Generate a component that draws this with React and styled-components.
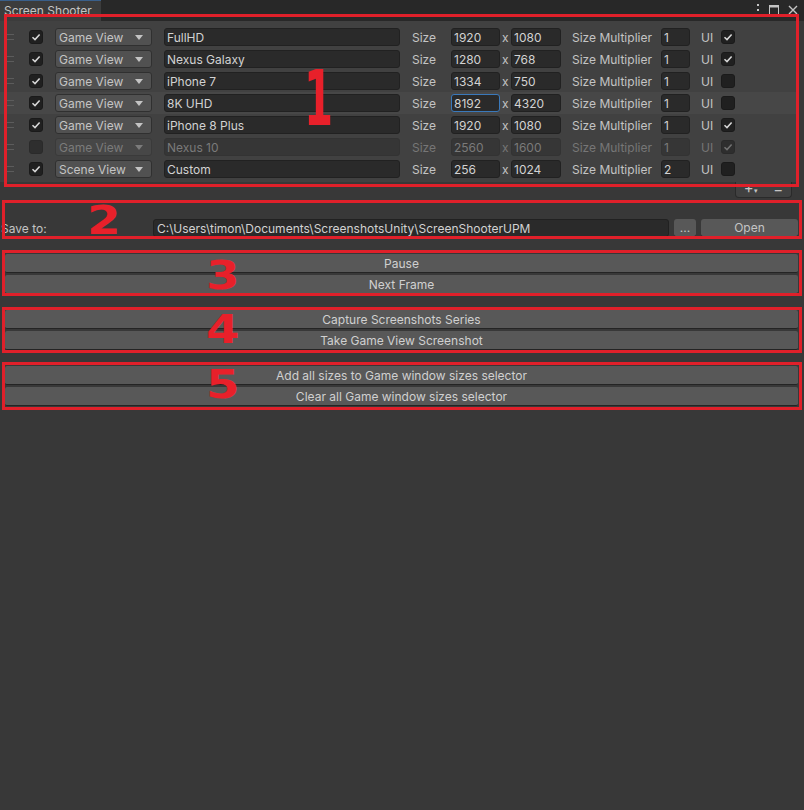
import styled, { createGlobalStyle, css } from "styled-components";

const GlobalStyle = createGlobalStyle`
  html, body {
    margin: 0;
    padding: 0;
    background: #383838;
  }
  body {
    font-family: Inter, "Noto Sans", sans-serif;
    font-size: 12px;
    color: #c4c4c4;
  }
`;

const sizes = [
  { on: true, view: "Game View", name: "FullHD", w: "1920", h: "1080", mult: "1", ui: true },
  { on: true, view: "Game View", name: "Nexus Galaxy", w: "1280", h: "768", mult: "1", ui: true },
  { on: true, view: "Game View", name: "iPhone 7", w: "1334", h: "750", mult: "1", ui: false },
  { on: true, view: "Game View", name: "8K UHD", w: "8192", h: "4320", mult: "1", ui: false, hover: true, focus: true },
  { on: true, view: "Game View", name: "iPhone 8 Plus", w: "1920", h: "1080", mult: "1", ui: true },
  { on: false, view: "Game View", name: "Nexus 10", w: "2560", h: "1600", mult: "1", ui: true, disabled: true },
  { on: true, view: "Scene View", name: "Custom", w: "256", h: "1024", mult: "2", ui: false },
];

// red annotation boxes drawn over the screenshot
const frames = [
  { x: 4, y: 14, w: 795, h: 173 },
  { x: 2, y: 200, w: 800, h: 39 },
  { x: 2, y: 250, w: 800, h: 46 },
  { x: 2, y: 307, w: 800, h: 46 },
  { x: 2, y: 362, w: 800, h: 48 },
];

const marks = [
  { n: "1", x: 304, y: 60, tall: true },
  { n: "2", x: 87, y: 201 },
  { n: "3", x: 206, y: 256 },
  { n: "4", x: 206, y: 310 },
  { n: "5", x: 206, y: 365 },
];

function Check() {
  return (
    <svg width="10" height="10" viewBox="0 0 10 10">
      <polyline points="1.5,5.2 4,7.6 8.6,2.4" fill="none" stroke="currentColor" strokeWidth="1.5" />
    </svg>
  );
}

function Checkbox({ checked, disabled }) {
  return <Box $disabled={disabled}>{checked && <Check />}</Box>;
}

function SizeRow({ row }) {
  const d = row.disabled;
  return (
    <Row $hover={row.hover}>
      <Handle />
      <Checkbox checked={row.on} disabled={d} />
      <Dropdown $disabled={d}>
        <span>{row.view}</span>
        <Arrow />
      </Dropdown>
      <Field $w={236} $disabled={d}>{row.name}</Field>
      <Label $disabled={d}>Size</Label>
      <Field $w={49} $disabled={d} $focus={row.focus}>{row.w}</Field>
      <Times $disabled={d}>x</Times>
      <Field $w={50} $disabled={d}>{row.h}</Field>
      <Label $disabled={d}>Size Multiplier</Label>
      <Field $w={29} $disabled={d}>{row.mult}</Field>
      <Label $disabled={d}>UI</Label>
      <Checkbox checked={row.ui} disabled={d} />
    </Row>
  );
}

export default function App() {
  return (
    <Window>
      <GlobalStyle />
      <TabBar>
        <Tab>Screen Shooter</Tab>
        <WindowIcons>
          <svg width="4" height="12" viewBox="0 0 4 12">
            <rect x="1" y="0" width="2" height="2" fill="#c4c4c4" />
            <rect x="1" y="5" width="2" height="2" fill="#c4c4c4" />
            <rect x="1" y="10" width="2" height="2" fill="#c4c4c4" />
          </svg>
          <svg width="10" height="10" viewBox="0 0 10 10">
            <rect x="0.5" y="0.5" width="9" height="9" fill="none" stroke="#c4c4c4" />
            <rect x="0.5" y="0.5" width="9" height="2" fill="#c4c4c4" />
          </svg>
          <svg width="10" height="10" viewBox="0 0 10 10">
            <path d="M1 1 L9 9 M9 1 L1 9" stroke="#c4c4c4" strokeWidth="1.4" />
          </svg>
        </WindowIcons>
      </TabBar>

      <ListPanel>
        {sizes.map((row, i) => (
          <SizeRow key={i} row={row} />
        ))}
      </ListPanel>
      <ListFooter>
        <FooterButtons>
          <span>
            +<small>▾</small>
          </span>
          <span>−</span>
        </FooterButtons>
      </ListFooter>

      <SaveRow>
        <SaveLabel>Save to:</SaveLabel>
        <PathField>C:\Users\timon\Documents\ScreenshotsUnity\ScreenShooterUPM</PathField>
        <SmallButton>...</SmallButton>
        <SmallButton>Open</SmallButton>
      </SaveRow>

      <ButtonGroup $first>
        <WideButton>Pause</WideButton>
        <WideButton>Next Frame</WideButton>
      </ButtonGroup>
      <ButtonGroup>
        <WideButton>Capture Screenshots Series</WideButton>
        <WideButton>Take Game View Screenshot</WideButton>
      </ButtonGroup>
      <ButtonGroup>
        <WideButton>Add all sizes to Game window sizes selector</WideButton>
        <WideButton>Clear all Game window sizes selector</WideButton>
      </ButtonGroup>

      {frames.map((f, i) => (
        <Frame key={i} style={{ left: f.x, top: f.y, width: f.w, height: f.h }} />
      ))}
      {marks.map((m) => (
        <Mark key={m.n} $tall={m.tall} style={{ left: m.x, top: m.y }}>
          {m.n}
        </Mark>
      ))}
    </Window>
  );
}

const Window = styled.div`
  position: relative;
  width: 804px;
  height: 810px;
  overflow: hidden;
  background: #383838;
`;

const TabBar = styled.div`
  display: flex;
  justify-content: space-between;
  align-items: flex-start;
  height: 21px;
  background: #282828;
`;

const Tab = styled.div`
  width: 101px;
  height: 21px;
  padding-left: 4px;
  box-sizing: border-box;
  background: #3c3c3c;
  border-top: 1px solid #3a5f8a;
  color: #c4c4c4;
  font-size: 12px;
  line-height: 20px;
`;

const WindowIcons = styled.div`
  display: flex;
  align-items: center;
  gap: 9px;
  padding: 4px 6px 0 0;
`;

const ListPanel = styled.div`
  background: #414141;
  padding: 5px 0 2px;
  margin-right: 6px;
`;

const Row = styled.div`
  display: grid;
  grid-template-columns: 24px 26px 109px 248px 39px 49px 11px 61px 89px 40px 20px 14px;
  align-items: center;
  height: 22px;
  padding-left: 5px;
  background: ${(p) => (p.$hover ? "#474747" : "transparent")};
`;

const Handle = styled.div`
  width: 9px;
  height: 4px;
  border-top: 1px solid #5c5c5c;
  border-bottom: 1px solid #5c5c5c;
`;

const Box = styled.div`
  width: 14px;
  height: 14px;
  box-sizing: border-box;
  border-radius: 3px;
  background: #202020;
  border: 1px solid #1a1a1a;
  color: #d8d8d8;
  display: flex;
  align-items: center;
  justify-content: center;
  ${(p) =>
    p.$disabled &&
    css`
      background: #2e2e2e;
      border-color: #2a2a2a;
      color: #727272;
    `}
`;

const Dropdown = styled.div`
  width: 97px;
  height: 18px;
  box-sizing: border-box;
  display: flex;
  align-items: center;
  justify-content: space-between;
  padding: 0 8px 0 3px;
  background: #515151;
  border: 1px solid #303030;
  border-radius: 3px;
  color: ${(p) => (p.$disabled ? "#7b7b7b" : "#c4c4c4")};
  ${(p) => p.$disabled && "background: #474747; border-color: #3a3a3a;"}
`;

const Arrow = styled.span`
  width: 0;
  height: 0;
  border-left: 4px solid transparent;
  border-right: 4px solid transparent;
  border-top: 5px solid currentColor;
`;

const Field = styled.div`
  width: ${(p) => (p.$w ? `${p.$w}px` : "auto")};
  height: 18px;
  box-sizing: border-box;
  display: flex;
  align-items: center;
  padding-left: 2px;
  background: #2a2a2a;
  border: 1px solid #212121;
  border-radius: 3px;
  color: #d2d2d2;
  font-size: 12px;
  ${(p) =>
    p.$focus &&
    css`
      border-color: #3a79bb;
    `}
  ${(p) =>
    p.$disabled &&
    css`
      background: #363636;
      border-color: #333333;
      color: #7a7a7a;
    `}
`;

const Label = styled.div`
  color: ${(p) => (p.$disabled ? "#767676" : "#c4c4c4")};
  font-size: 12px;
  white-space: nowrap;
`;

const Times = styled(Label)`
  padding-left: 2px;
`;

const ListFooter = styled.div`
  display: flex;
  justify-content: flex-end;
  padding-right: 12px;
`;

const FooterButtons = styled.div`
  display: flex;
  justify-content: space-around;
  align-items: center;
  width: 55px;
  height: 15px;
  background: #414141;
  border: 1px solid #2a2a2a;
  border-top: none;
  border-radius: 0 0 4px 4px;
  color: #c4c4c4;
  font-size: 15px;
  line-height: 14px;
  small {
    font-size: 7px;
  }
`;

const SaveRow = styled.div`
  display: grid;
  grid-template-columns: 147px 516px 22px 97px;
  column-gap: 5px;
  align-items: center;
  margin: 21px 0 0 0;
  padding-left: 1px;
  height: 18px;
`;

const SaveLabel = styled.div`
  color: #c4c4c4;
  font-size: 12px;
`;

const PathField = styled(Field)`
  padding-left: 3px;
  white-space: nowrap;
  overflow: hidden;
`;

const SmallButton = styled.div`
  height: 18px;
  display: flex;
  align-items: center;
  justify-content: center;
  background: #585858;
  border-radius: 3px;
  border-bottom: 1px solid #242424;
  box-sizing: border-box;
  color: #c4c4c4;
  font-size: 12px;
`;

const ButtonGroup = styled.div`
  display: flex;
  flex-direction: column;
  gap: 2px;
  margin: ${(p) => (p.$first ? "17px" : "16px")} 6px 0 5px;
`;

const WideButton = styled.div`
  height: 19px;
  box-sizing: border-box;
  display: flex;
  align-items: center;
  justify-content: center;
  background: #585858;
  border-bottom: 1px solid #242424;
  border-radius: 2px;
  color: #d0d0d0;
  font-size: 12px;
`;

const Frame = styled.div`
  position: absolute;
  box-sizing: border-box;
  border: 3px solid #e0202a;
  pointer-events: none;
`;

const Mark = styled.div`
  position: absolute;
  color: #e8202a;
  font-family: "DejaVu Sans", sans-serif;
  font-weight: bold;
  font-size: ${(p) => (p.$tall ? "44px" : "46px")};
  line-height: 1;
  transform-origin: top left;
  transform: ${(p) => (p.$tall ? "scale(0.95, 1.75)" : "scale(1.05, 0.85)")};
`;
